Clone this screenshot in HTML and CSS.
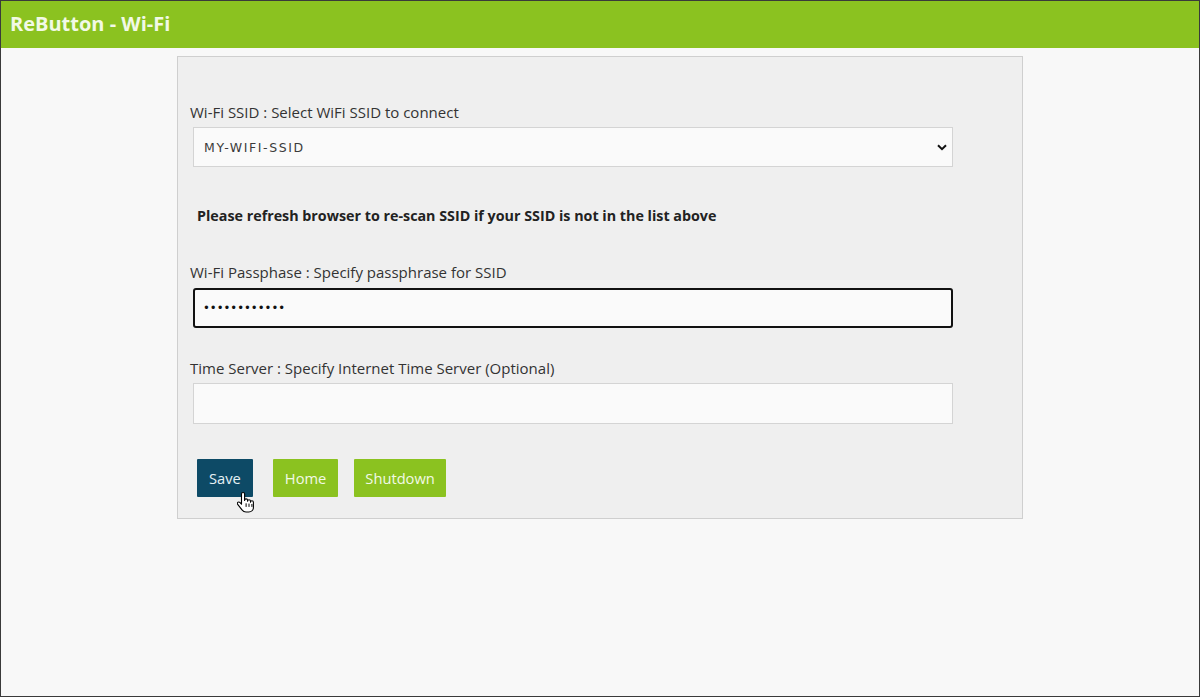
FILE: index.html
```html
<!DOCTYPE html>
<html lang="en">
<head>
    <meta charset="UTF-8">
    <meta name="viewport" content="width=device-width, initial-scale=1.0">
    <title>ReButton - Wi-Fi</title>
    <link rel="stylesheet" href="styles.css">
</head>
<body>
    <div class="window">
        <div class="topbar">ReButton - Wi-Fi</div>

        <div class="panel">
            <form class="wifi-form" action="#" onsubmit="return false">
                <label class="field-label" for="ssid">Wi-Fi SSID : Select WiFi SSID to connect</label>
                <select class="field" id="ssid" name="ssid">
                    <option>MY-WIFI-SSID</option>
                </select>

                <p class="note">Please refresh browser to re-scan SSID if your SSID is not in the list above</p>

                <label class="field-label" for="pass">Wi-Fi Passphase : Specify passphrase for SSID</label>
                <input class="field field-focus" id="pass" type="password" name="pass" value="mysecretpass" autofocus>

                <label class="field-label" for="ntp">Time Server : Specify Internet Time Server (Optional)</label>
                <input class="field" id="ntp" type="text" name="ntp">

                <div class="button-row">
                    <button class="btn btn-save" type="submit">Save
                        <svg class="hand" viewBox="0 0 18 24" width="18" height="24">
                            <path d="M6 1.5c-.8 0-1.5.7-1.5 1.5v10.2l-1.7-1.8c-.6-.6-1.6-.6-2.1 0-.5.5-.5 1.3 0 1.9l4.3 5.6c1 1.3 2.4 2.1 4 2.1h2.8c2.6 0 4.6-2 4.6-4.6v-5.2c0-.8-.7-1.5-1.5-1.5s-1.4.7-1.4 1.5v-.9c0-.8-.7-1.5-1.5-1.5s-1.4.7-1.4 1.5v-.9c0-.8-.7-1.5-1.5-1.5s-1.5.7-1.5 1.5V3c0-.8-.7-1.5-1.6-1.5z" fill="#fff" stroke="#000" stroke-width="1.1" stroke-linejoin="round"/>
                            <path d="M9.1 12.3v3.6M12 12.6v3.3M14.9 13v2.9" stroke="#000" stroke-width="1" fill="none"/>
                        </svg>
                    </button>
                    <button class="btn btn-green btn-home" type="button">Home</button>
                    <button class="btn btn-green" type="button">Shutdown</button>
                </div>
            </form>
        </div>
    </div>
</body>
</html>
```

FILE: styles.css
```css
html, body {
    margin: 0;
    padding: 0;
}

body {
    font-family: "Open Sans", "Noto Sans", sans-serif;
    background-color: #f8f8f8;
    color: #333;
}

.window {
    box-sizing: border-box;
    height: 697px;
    border: 1px solid #3a3a3a;
    background: #f8f8f8;
}

.topbar {
    height: 47px;
    background: #8bc220;
    color: #f2f9e6;
    font-size: 20px;
    font-weight: 700;
    line-height: 45px;
    padding-left: 9px;
}

.panel {
    box-sizing: border-box;
    width: 846px;
    margin: 8px auto 0;
    background: #efefef;
    border: 1px solid #cfcfcf;
    padding: 45px 12px 21px;
}

.wifi-form {
    display: flex;
    flex-direction: column;
    align-items: flex-start;
}

.field-label {
    font-size: 15px;
    line-height: 20px;
    color: #333;
}

.field {
    box-sizing: border-box;
    width: 760px;
    height: 40px;
    margin: 5px 0 0 3px;
    background: #fafafa;
    border: 1px solid #d4d4d4;
    border-radius: 0;
    font-family: "DejaVu Sans", sans-serif;
    font-size: 12.5px;
    letter-spacing: 1.6px;
    color: #3a3a3a;
    padding: 0 10px;
    outline: none;
}

select.field {
    appearance: none;
    background-image: url("data:image/svg+xml;utf8,<svg xmlns='http://www.w3.org/2000/svg' width='10' height='7' viewBox='0 0 10 7'><path d='M1 1.2l4 4 4-4' fill='none' stroke='%23111' stroke-width='2'/></svg>");
    background-repeat: no-repeat;
    background-position: right 5px center;
}

.field-focus {
    border: 2px solid #111;
    border-radius: 3px;
    padding-left: 8px;
    margin-top: 6px;
    font-size: 11.6px;
    letter-spacing: 0;
    color: #111;
    caret-color: #000;
}

#ntp {
    height: 41px;
}

.note {
    margin: 39px 0 0 7px;
    font-size: 14.3px;
    line-height: 20px;
    font-weight: 700;
    color: #222;
}

.note + .field-label {
    margin-top: 36px;
}

.field + .field-label {
    margin-top: 30px;
}

.button-row {
    display: flex;
    gap: 16px;
    margin: 35px 0 0 7px;
}

.btn {
    position: relative;
    height: 38px;
    padding: 0 11px;
    border: none;
    border-radius: 1px;
    font-family: "Open Sans", "Noto Sans", sans-serif;
    font-size: 14.7px;
    color: #f2f9e6;
    cursor: pointer;
}

.btn-save {
    padding: 0 12px;
    background: #0d4a66;
    color: #e6f1f5;
}

.btn-home {
    margin-left: 4px;
    padding: 0 12px;
}

.btn-green {
    background: #8bc220;
}

.hand {
    position: absolute;
    left: 40px;
    top: 32px;
}
```
